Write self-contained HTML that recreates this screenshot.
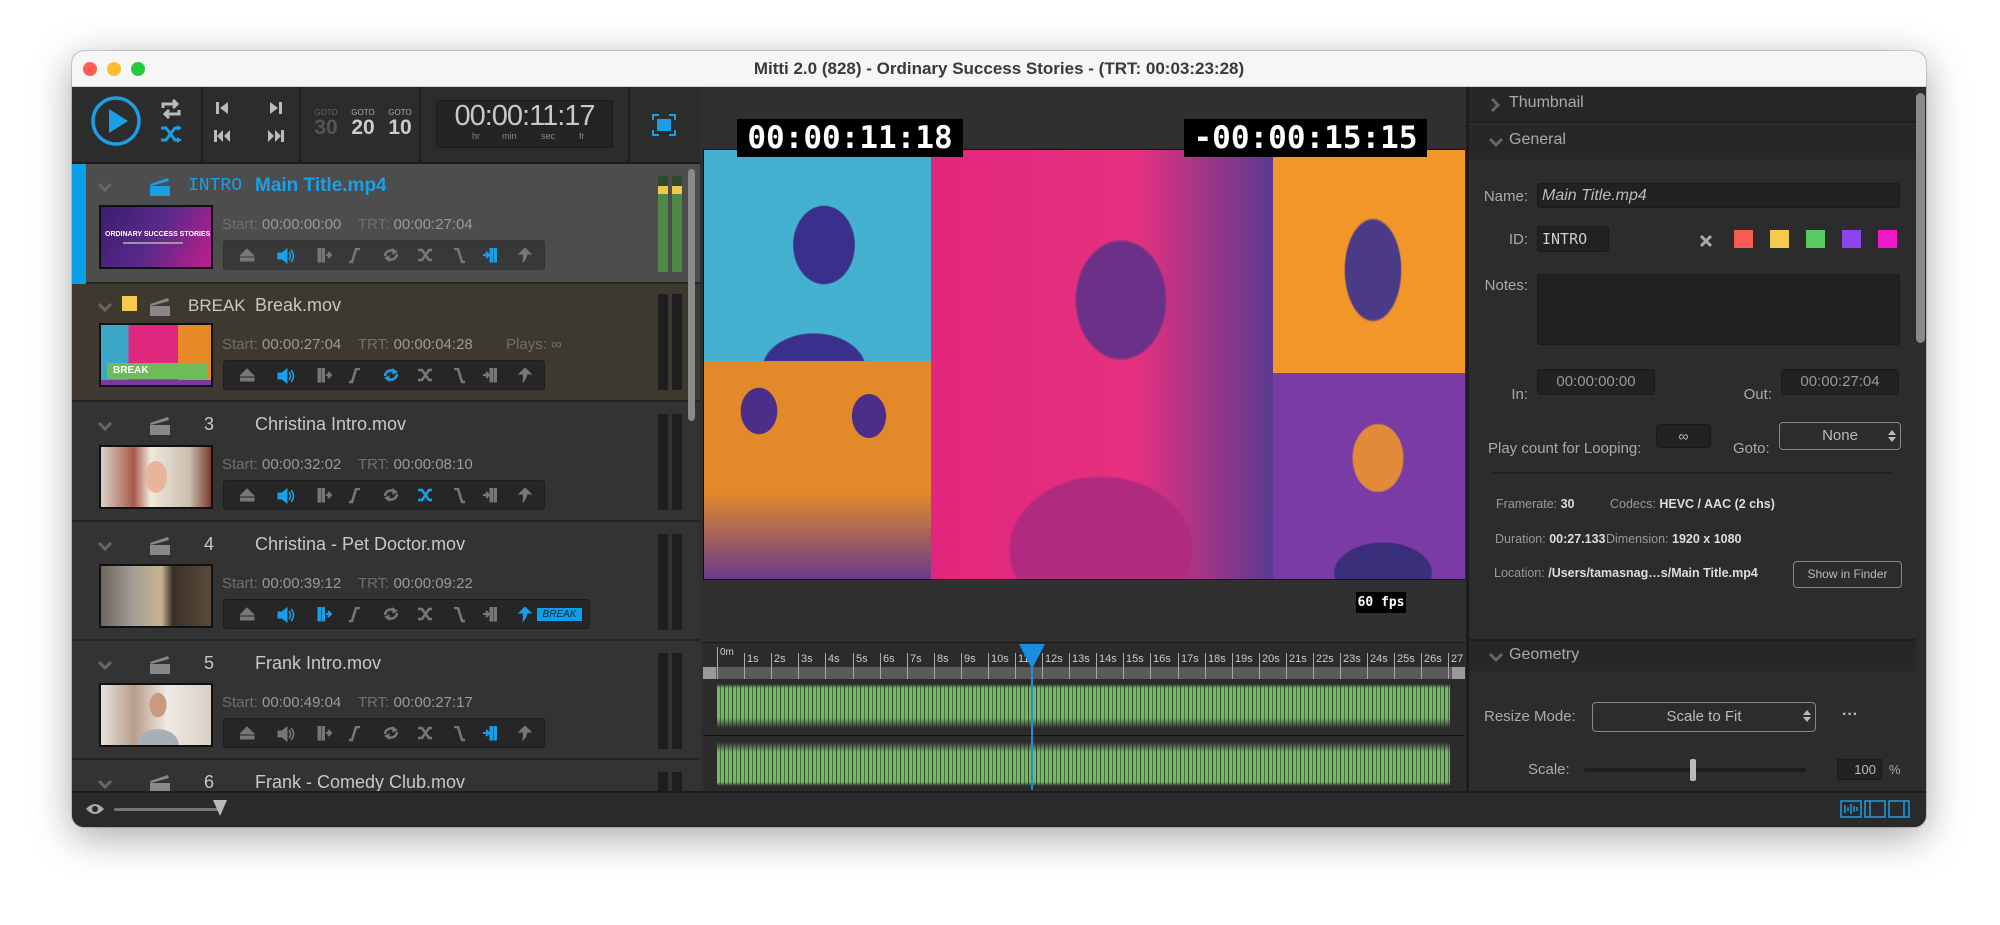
<!DOCTYPE html>
<html><head><meta charset="utf-8"><style>
*{box-sizing:border-box;margin:0;padding:0}
body{width:2000px;height:925px;background:#fff;position:relative;overflow:hidden;font-family:"Liberation Sans",sans-serif}
.abs{position:absolute}
.win{position:absolute;left:72px;top:51px;width:1854px;height:776px;border-radius:12px;overflow:hidden;background:#2b2b2b;box-shadow:0 10px 40px rgba(0,0,0,.35),0 0 0 1px rgba(0,0,0,.15)}
.title{position:absolute;left:0;top:0;width:100%;height:36px;background:#f6f6f6;border-bottom:1px solid #d0d0d0;text-align:center;font-size:17px;font-weight:bold;color:#3a3a3a;line-height:36px}
.tl{position:absolute;top:11px;width:14px;height:14px;border-radius:50%}
.row{position:absolute;left:0;width:628px;border-bottom:2px solid #242424;background:#333}
.chev{position:absolute;left:26px;width:14px;height:10px}
.clip{position:absolute;left:78px;width:20px;height:18px}
.rt{position:absolute;font-size:18px;color:#c8c8c8;white-space:nowrap}
.num{position:absolute;width:30px;text-align:right;left:112px;font-size:18px;color:#c8c8c8}
.thumb{position:absolute;left:27px;width:114px;height:64px;border:2px solid #111;overflow:hidden}
.st{position:absolute;left:150px;font-size:15px;color:#9a9a9a;white-space:nowrap}
.st b{font-weight:normal;color:#6f6f6f}
.ctrl{position:absolute;left:151px;height:30px;width:322px;background:#262626;border:1px solid #1d1d1d;border-radius:3px}
.met{position:absolute;width:10px;background:#1e1e1e}
.info{position:absolute;font-size:12.5px;color:#999;white-space:nowrap}
.info b{color:#ddd}
</style></head><body>
<div class="win">
<div class="title">Mitti 2.0 (828) - Ordinary Success Stories - (TRT: 00:03:23:28)</div>
<div class="tl" style="left:11px;background:#fe5f57"></div>
<div class="tl" style="left:35px;background:#febc2e"></div>
<div class="tl" style="left:59px;background:#28c840"></div>

<div class="abs" style="left:0;top:36px;width:628px;height:77px;background:#2c2c2c;border-bottom:2px solid #1c1c1c"></div>
<svg class="abs" style="left:18px;top:44px" width="52" height="52" viewBox="0 0 52 52"><circle cx="26" cy="26" r="23" fill="none" stroke="#1a9fe6" stroke-width="3.5"/><path d="M19 14 L38 26 L19 38Z" fill="#1a9fe6"/></svg>
<svg class="abs" style="left:88px;top:48px" width="22" height="20" viewBox="0 0 22 20"><path d="M3 9V5h13M13 1l4 4-4 4M19 11v4H6M9 19l-4-4 4-4" fill="none" stroke="#bbb" stroke-width="3"/></svg>
<svg class="abs" style="left:88px;top:74px" width="22" height="18" viewBox="0 0 22 18"><path d="M1 3h5l9 12h5M1 15h5l9-12h5" fill="none" stroke="#1a9fe6" stroke-width="3"/><path d="M17 0l5 3-5 3zM17 12l5 3-5 3z" fill="#1a9fe6"/></svg>
<div class="abs" style="left:129px;top:36px;width:2px;height:77px;background:#1c1c1c"></div>
<div class="abs" style="left:227px;top:36px;width:2px;height:77px;background:#1c1c1c"></div>
<div class="abs" style="left:347px;top:36px;width:2px;height:77px;background:#1c1c1c"></div>
<div class="abs" style="left:556px;top:36px;width:2px;height:77px;background:#1c1c1c"></div>
<svg class="abs" style="left:143px;top:50px" width="14" height="14"><rect x="1" y="1" width="3" height="12" fill="#bbb"/><path d="M13 1 L5 7 L13 13Z" fill="#bbb"/></svg>
<svg class="abs" style="left:197px;top:50px" width="14" height="14"><rect x="10" y="1" width="3" height="12" fill="#bbb"/><path d="M1 1 L9 7 L1 13Z" fill="#bbb"/></svg>
<svg class="abs" style="left:141px;top:78px" width="18" height="14"><rect x="1" y="1" width="3" height="12" fill="#bbb"/><path d="M10 1 L4 7 L10 13Z M17 1 L11 7 L17 13Z" fill="#bbb"/></svg>
<svg class="abs" style="left:195px;top:78px" width="18" height="14"><rect x="14" y="1" width="3" height="12" fill="#bbb"/><path d="M1 1 L7 7 L1 13Z M8 1 L14 7 L8 13Z" fill="#bbb"/></svg>
<div class="abs" style="left:240px;top:57px;width:28px;text-align:center;font-size:8px;color:#666">GOTO</div>
<div class="abs" style="left:240px;top:65px;width:28px;text-align:center;font-size:21px;font-weight:bold;color:#555">30</div>
<div class="abs" style="left:277px;top:57px;width:28px;text-align:center;font-size:8px;color:#aaa">GOTO</div>
<div class="abs" style="left:277px;top:65px;width:28px;text-align:center;font-size:21px;font-weight:bold;color:#ccc">20</div>
<div class="abs" style="left:314px;top:57px;width:28px;text-align:center;font-size:8px;color:#aaa">GOTO</div>
<div class="abs" style="left:314px;top:65px;width:28px;text-align:center;font-size:21px;font-weight:bold;color:#ccc">10</div>
<div class="abs" style="left:364px;top:49px;width:177px;height:48px;background:#242424;border:1px solid #1a1a1a;border-radius:3px"></div>
<div class="abs" style="left:364px;top:49px;width:177px;text-align:center;font-size:29px;color:#c8c8c8;letter-spacing:-1px">00:00:11:17</div>
<div class="abs" style="left:372px;top:80px;font-size:9px;color:#888"><span style="position:absolute;left:28px">hr</span><span style="position:absolute;left:58px">min</span><span style="position:absolute;left:97px">sec</span><span style="position:absolute;left:135px">fr</span></div>
<svg class="abs" style="left:580px;top:63px" width="24" height="22" viewBox="0 0 24 22"><path d="M1 6V1h6M17 1h6v5M23 16v5h-6M7 21H1v-5" fill="none" stroke="#1a9fe6" stroke-width="2"/><rect x="5" y="5" width="14" height="12" fill="#1a9fe6"/></svg>

<div class="abs" style="left:0;top:113px;width:628px;height:627px;background:#2a2a2a"></div>

<div class="row" style="top:113px;height:120px;background:#4d4d4d">
 <div class="abs" style="left:0;top:0;width:14px;height:120px;background:#0da0ea"></div>
 <svg class="chev" style="top:19px" viewBox="0 0 14 10"><path d="M1 1l6 6 6-6" fill="none" stroke="#666" stroke-width="3"/></svg>
 <svg class="clip" style="top:14px" viewBox="0 0 20 18"><path d="M0 8h20v10H0z M0 6 L18 0 L19 3 L1 8z" fill="#1a9fe6"/></svg>
 <div class="rt" style="left:116px;top:12px;color:#1aa0e8;font-family:'Liberation Mono',monospace;font-size:18px">INTRO</div>
 <div class="rt" style="left:183px;top:11px;color:#1aa0e8;font-weight:bold;font-size:19px">Main Title.mp4</div>
 <div class="thumb" style="top:41px;background:linear-gradient(120deg,#3b1d6e,#5a2a8a 50%,#c01e8a 100%)"><div style="position:absolute;left:4px;top:24px;font-size:7px;font-weight:bold;color:#fff;white-space:nowrap">ORDINARY SUCCESS STORIES</div><div style="position:absolute;left:22px;top:35px;width:60px;height:2px;background:#999"></div></div>
 <div class="st" style="top:52px"><b>Start:</b> 00:00:00:00 &nbsp;&nbsp;&nbsp;<b>TRT:</b> 00:00:27:04</div>
 <div class="ctrl" style="top:76px;background:#383838;border-color:#333"></div>
 <div class="met" style="left:586px;top:12px;height:96px;background:#2d4a2d"><div style="position:absolute;left:0;top:10px;width:10px;height:8px;background:#f2c84b"></div><div style="position:absolute;left:0;top:18px;width:10px;height:78px;background:#4e8a45"></div></div>
 <div class="met" style="left:600px;top:12px;height:96px;background:#2d4a2d"><div style="position:absolute;left:0;top:10px;width:10px;height:8px;background:#f2c84b"></div><div style="position:absolute;left:0;top:18px;width:10px;height:78px;background:#4e8a45"></div></div>
</div>

<div class="row" style="top:233px;height:118px;background:#3d3830">
 <svg class="chev" style="top:19px" viewBox="0 0 14 10"><path d="M1 1l6 6 6-6" fill="none" stroke="#666" stroke-width="3"/></svg>
 <div class="abs" style="left:50px;top:12px;width:15px;height:15px;background:#f2cb4f"></div>
 <svg class="clip" style="top:14px" viewBox="0 0 20 18"><path d="M0 8h20v10H0z M0 6 L18 0 L19 3 L1 8z" fill="#888"/></svg>
 <div class="rt" style="left:116px;top:12px;font-size:17px">BREAK</div>
 <div class="rt" style="left:183px;top:11px">Break.mov</div>
 <div class="thumb" style="top:39px;background:linear-gradient(90deg,#3aa6c8 0 25%,#e0287e 25% 70%,#e88a2a 70%)"><div style="position:absolute;left:6px;top:38px;width:100px;height:16px;background:#6dbb5a;color:#fff;font-size:10px;font-weight:bold;padding:2px 0 0 6px">BREAK</div><div style="position:absolute;left:0;top:55px;width:114px;height:9px;background:#7c3aa0"></div></div>
 <div class="st" style="top:52px"><b>Start:</b> 00:00:27:04 &nbsp;&nbsp;&nbsp;<b>TRT:</b> 00:00:04:28 &nbsp;&nbsp;&nbsp;&nbsp;&nbsp;&nbsp;&nbsp;<b>Plays:</b> <span style="color:#6f6f6f">∞</span></div>
 <div class="ctrl" style="top:76px"></div>
 <div class="met" style="left:586px;top:10px;height:96px"></div><div class="met" style="left:600px;top:10px;height:96px"></div>
</div>

<div class="row" style="top:351px;height:120px">
 <svg class="chev" style="top:20px" viewBox="0 0 14 10"><path d="M1 1l6 6 6-6" fill="none" stroke="#666" stroke-width="3"/></svg>
 <svg class="clip" style="top:15px" viewBox="0 0 20 18"><path d="M0 8h20v10H0z M0 6 L18 0 L19 3 L1 8z" fill="#888"/></svg>
 <div class="num" style="top:12px">3</div>
 <div class="rt" style="left:183px;top:12px">Christina Intro.mov</div>
 <div class="thumb" style="top:43px;background:radial-gradient(ellipse 18px 26px at 55px 30px,#e8b49a 60%,transparent 62%),linear-gradient(90deg,#d8d2c8,#a8594a 30%,#efe8dc 45%,#c9bfb0 80%,#7a3c30)"></div>
 <div class="st" style="top:54px"><b>Start:</b> 00:00:32:02 &nbsp;&nbsp;&nbsp;<b>TRT:</b> 00:00:08:10</div>
 <div class="ctrl" style="top:78px"></div>
 <div class="met" style="left:586px;top:12px;height:96px"></div><div class="met" style="left:600px;top:12px;height:96px"></div>
</div>

<div class="row" style="top:471px;height:119px">
 <svg class="chev" style="top:20px" viewBox="0 0 14 10"><path d="M1 1l6 6 6-6" fill="none" stroke="#666" stroke-width="3"/></svg>
 <svg class="clip" style="top:15px" viewBox="0 0 20 18"><path d="M0 8h20v10H0z M0 6 L18 0 L19 3 L1 8z" fill="#888"/></svg>
 <div class="num" style="top:12px">4</div>
 <div class="rt" style="left:183px;top:12px">Christina - Pet Doctor.mov</div>
 <div class="thumb" style="top:42px;background:linear-gradient(90deg,#6b665e,#a49f96 30%,#c9b48f 55%,#3b3129 65%,#5a4a3a)"></div>
 <div class="st" style="top:53px"><b>Start:</b> 00:00:39:12 &nbsp;&nbsp;&nbsp;<b>TRT:</b> 00:00:09:22</div>
 <div class="ctrl" style="top:77px;width:367px"><div style="position:absolute;left:313px;top:8px;width:45px;height:13px;background:#0da0ea;color:#123;font-size:10px;font-style:italic;text-align:center;line-height:13px">BREAK</div></div>
 <div class="met" style="left:586px;top:12px;height:96px"></div><div class="met" style="left:600px;top:12px;height:96px"></div>
</div>

<div class="row" style="top:590px;height:119px">
 <svg class="chev" style="top:20px" viewBox="0 0 14 10"><path d="M1 1l6 6 6-6" fill="none" stroke="#666" stroke-width="3"/></svg>
 <svg class="clip" style="top:15px" viewBox="0 0 20 18"><path d="M0 8h20v10H0z M0 6 L18 0 L19 3 L1 8z" fill="#888"/></svg>
 <div class="num" style="top:12px">5</div>
 <div class="rt" style="left:183px;top:12px">Frank Intro.mov</div>
 <div class="thumb" style="top:42px;background:radial-gradient(ellipse 14px 20px at 57px 20px,#c99a80 60%,transparent 62%),radial-gradient(ellipse 34px 26px at 57px 60px,#a7aeb5 60%,transparent 62%),linear-gradient(90deg,#e6e2dc,#b79e8a 30%,#eeeae4 60%,#d8cfc4)"></div>
 <div class="st" style="top:53px"><b>Start:</b> 00:00:49:04 &nbsp;&nbsp;&nbsp;<b>TRT:</b> 00:00:27:17</div>
 <div class="ctrl" style="top:77px"></div>
 <div class="met" style="left:586px;top:12px;height:96px"></div><div class="met" style="left:600px;top:12px;height:96px"></div>
</div>

<div class="row" style="top:709px;height:40px;border:none">
 <svg class="chev" style="top:20px" viewBox="0 0 14 10"><path d="M1 1l6 6 6-6" fill="none" stroke="#666" stroke-width="3"/></svg>
 <svg class="clip" style="top:15px" viewBox="0 0 20 18"><path d="M0 8h20v10H0z M0 6 L18 0 L19 3 L1 8z" fill="#888"/></svg>
 <div class="num" style="top:12px">6</div>
 <div class="rt" style="left:183px;top:12px">Frank - Comedy Club.mov</div>
 <div class="met" style="left:586px;top:12px;height:30px"></div><div class="met" style="left:600px;top:12px;height:30px"></div>
</div>
<div class="abs" style="left:616px;top:118px;width:7px;height:252px;border-radius:4px;background:#8a8a8a"></div>

<svg class="abs" style="left:0;top:0" width="628" height="740">
 <defs>
  <g id="ej"><path d="M0 8L7 1l7 7z M0 10h14v3H0z"/></g>
  <g id="sp"><path d="M0 5h4l5-4v14l-5-4H0z"/><path d="M11 4q3 4 0 8M13 2q5 6 0 12" fill="none" stroke-width="1.6"/></g>
  <g id="inp"><rect x="0" y="0" width="2.5" height="14"/><rect x="4" y="0" width="2.5" height="14"/><path d="M8 7h5M10 4l3 3-3 3" fill="none" stroke-width="2"/></g>
  <g id="fi"><path d="M1 14h3l4-13h4" fill="none" stroke-width="2.5"/></g>
  <g id="lp"><path d="M2 8a6 6 0 0 1 10-4M14 6a6 6 0 0 1-10 4" fill="none" stroke-width="2.5"/><path d="M10 1l4 3-4 2zM6 13l-4-3 4-2z"/></g>
  <g id="sh"><path d="M0 2h4l7 10h3M0 12h4l7-10h3" fill="none" stroke-width="2.5"/></g>
  <g id="fo"><path d="M1 1h4l4 13h3" fill="none" stroke-width="2.5"/></g>
  <g id="cu"><path d="M0 7h5M3 4l3 3-3 3" fill="none" stroke-width="2"/><rect x="7" y="0" width="2.5" height="14"/><rect x="11" y="0" width="2.5" height="14"/></g>
  <g id="ju"><path d="M7 0l6 6h-4q-1 5-4 8q1-5 0-8H1z"/></g>
 </defs>
</svg>
<div class="abs" style="left:0;top:0;width:628px;height:740px">
 <svg class="abs" style="left:168px;top:197px" width="320" height="16" fill="#777" stroke="#777">
  <use href="#ej" x="0"/><use href="#sp" x="38" fill="#1a9fe6" stroke="#1a9fe6"/><use href="#inp" x="78"/><use href="#fi" x="108"/><use href="#lp" x="143"/><use href="#sh" x="178"/><use href="#fo" x="213"/><use href="#cu" x="243" fill="#1a9fe6" stroke="#1a9fe6"/><use href="#ju" x="278"/>
 </svg>
 <svg class="abs" style="left:168px;top:317px" width="320" height="16" fill="#777" stroke="#777">
  <use href="#ej" x="0"/><use href="#sp" x="38" fill="#1a9fe6" stroke="#1a9fe6"/><use href="#inp" x="78"/><use href="#fi" x="108"/><use href="#lp" x="143" fill="#1a9fe6" stroke="#1a9fe6"/><use href="#sh" x="178"/><use href="#fo" x="213"/><use href="#cu" x="243"/><use href="#ju" x="278"/>
 </svg>
 <svg class="abs" style="left:168px;top:437px" width="320" height="16" fill="#777" stroke="#777">
  <use href="#ej" x="0"/><use href="#sp" x="38" fill="#1a9fe6" stroke="#1a9fe6"/><use href="#inp" x="78"/><use href="#fi" x="108"/><use href="#lp" x="143"/><use href="#sh" x="178" fill="#1a9fe6" stroke="#1a9fe6"/><use href="#fo" x="213"/><use href="#cu" x="243"/><use href="#ju" x="278"/>
 </svg>
 <svg class="abs" style="left:168px;top:556px" width="320" height="16" fill="#777" stroke="#777">
  <use href="#ej" x="0"/><use href="#sp" x="38" fill="#1a9fe6" stroke="#1a9fe6"/><use href="#inp" x="78" fill="#1a9fe6" stroke="#1a9fe6"/><use href="#fi" x="108"/><use href="#lp" x="143"/><use href="#sh" x="178"/><use href="#fo" x="213"/><use href="#cu" x="243"/><use href="#ju" x="278" fill="#1a9fe6" stroke="#1a9fe6"/>
 </svg>
 <svg class="abs" style="left:168px;top:675px" width="320" height="16" fill="#777" stroke="#777">
  <use href="#ej" x="0"/><use href="#sp" x="38"/><use href="#inp" x="78"/><use href="#fi" x="108"/><use href="#lp" x="143"/><use href="#sh" x="178"/><use href="#fo" x="213"/><use href="#cu" x="243" fill="#1a9fe6" stroke="#1a9fe6"/><use href="#ju" x="278"/>
 </svg>
</div>

<div class="abs" style="left:0;top:740px;width:1854px;height:36px;background:#2a2a2a;border-top:2px solid #1c1c1c"></div>
<svg class="abs" style="left:13px;top:752px" width="20" height="12"><path d="M1 6q9-10 18 0q-9 10-18 0z" fill="#aaa"/><circle cx="10" cy="6" r="3" fill="#2a2a2a"/></svg>
<div class="abs" style="left:42px;top:757px;width:106px;height:3px;background:#777;border-radius:2px"></div>
<svg class="abs" style="left:140px;top:748px" width="16" height="18"><path d="M1 1h14L8 17z" fill="#bbb"/></svg>
<svg class="abs" style="left:1768px;top:749px" width="80" height="18" fill="none" stroke="#1a9fe6" stroke-width="1.5"><rect x="1" y="1" width="20" height="16"/><path d="M5 5v8M8 7v4M11 4v10M14 6v6M17 7v4"/><rect x="25" y="1" width="20" height="16"/><path d="M30 1v16"/><rect x="49" y="1" width="20" height="16"/><path d="M64 1v16"/></svg>

<div class="abs" style="left:628px;top:36px;width:766px;height:704px;background:#303030"></div>
<div class="abs" style="left:631px;top:98px;width:762px;height:431px;background:#111"></div>
<div class="abs" style="left:632px;top:99px;width:227px;height:211px;background:radial-gradient(ellipse 55px 70px at 120px 95px,#3a2f8a 55%,transparent 57%),radial-gradient(ellipse 85px 60px at 110px 220px,#3a2f8a 60%,transparent 62%),#43b1cf"></div>
<div class="abs" style="left:632px;top:310px;width:227px;height:218px;background:radial-gradient(ellipse 30px 38px at 55px 50px,#4a2e8a 60%,transparent 62%),radial-gradient(ellipse 28px 36px at 165px 55px,#4a2e8a 60%,transparent 62%),linear-gradient(180deg,#e28a2a 60%,#6a3a8c 100%)"></div>
<div class="abs" style="left:859px;top:99px;width:342px;height:429px;background:radial-gradient(ellipse 80px 105px at 190px 150px,#6b3088 55%,transparent 58%),radial-gradient(ellipse 150px 120px at 170px 400px,#b02a80 60%,transparent 62%),linear-gradient(90deg,#e2267d,#e6307f 60%,#5a3a90 100%)"></div>
<div class="abs" style="left:1201px;top:99px;width:192px;height:223px;background:radial-gradient(ellipse 50px 90px at 100px 120px,#4a3a88 55%,transparent 58%),#f2962a"></div>
<div class="abs" style="left:1201px;top:322px;width:192px;height:206px;background:radial-gradient(ellipse 45px 60px at 105px 85px,#e28a3a 55%,transparent 58%),radial-gradient(ellipse 80px 50px at 110px 200px,#3a2f7a 60%,transparent 62%),#7a3ca4"></div>
<div class="abs" style="left:665px;top:68px;width:226px;height:38px;background:#000;color:#fff;font-family:'DejaVu Sans Mono','Liberation Mono',monospace;font-weight:bold;font-size:31px;line-height:38px;text-align:center">00:00:11:18</div>
<div class="abs" style="left:1112px;top:68px;width:243px;height:38px;background:#000;color:#fff;font-family:'DejaVu Sans Mono','Liberation Mono',monospace;font-weight:bold;font-size:31px;line-height:38px;text-align:center">-00:00:15:15</div>
<div class="abs" style="left:1284px;top:541px;width:50px;height:21px;background:#000;color:#fff;font-family:'DejaVu Sans Mono',monospace;font-weight:bold;font-size:13px;line-height:21px;text-align:center;white-space:nowrap">60 fps</div>

<div class="abs" style="left:631px;top:591px;width:762px;height:149px;background:#2b2b2b;border-top:1px solid #1a1a1a"></div>
<div class="abs" style="left:631px;top:616px;width:762px;height:12px;background:#5a5a5a"><div style="position:absolute;left:0;width:13px;height:12px;background:#999"></div><div style="position:absolute;right:0;width:13px;height:12px;background:#999"></div></div>
<div class="abs" style="left:645px;top:596px;width:740px;height:32px;font-size:11px;color:#ccc">
 <div style="position:absolute;left:0;top:0;border-left:1px solid #aaa;height:32px;padding-left:2px;font-size:10px">0m</div>
 <div style="position:absolute;left:27px;top:6px;border-left:1px solid #aaa;height:26px;padding-left:2px">1s</div>
 <div style="position:absolute;left:54px;top:6px;border-left:1px solid #aaa;height:26px;padding-left:2px">2s</div>
 <div style="position:absolute;left:81px;top:6px;border-left:1px solid #aaa;height:26px;padding-left:2px">3s</div>
 <div style="position:absolute;left:108px;top:6px;border-left:1px solid #aaa;height:26px;padding-left:2px">4s</div>
 <div style="position:absolute;left:136px;top:6px;border-left:1px solid #aaa;height:26px;padding-left:2px">5s</div>
 <div style="position:absolute;left:163px;top:6px;border-left:1px solid #aaa;height:26px;padding-left:2px">6s</div>
 <div style="position:absolute;left:190px;top:6px;border-left:1px solid #aaa;height:26px;padding-left:2px">7s</div>
 <div style="position:absolute;left:217px;top:6px;border-left:1px solid #aaa;height:26px;padding-left:2px">8s</div>
 <div style="position:absolute;left:244px;top:6px;border-left:1px solid #aaa;height:26px;padding-left:2px">9s</div>
 <div style="position:absolute;left:271px;top:6px;border-left:1px solid #aaa;height:26px;padding-left:2px">10s</div>
 <div style="position:absolute;left:298px;top:6px;border-left:1px solid #aaa;height:26px;padding-left:2px">11s</div>
 <div style="position:absolute;left:325px;top:6px;border-left:1px solid #aaa;height:26px;padding-left:2px">12s</div>
 <div style="position:absolute;left:352px;top:6px;border-left:1px solid #aaa;height:26px;padding-left:2px">13s</div>
 <div style="position:absolute;left:379px;top:6px;border-left:1px solid #aaa;height:26px;padding-left:2px">14s</div>
 <div style="position:absolute;left:406px;top:6px;border-left:1px solid #aaa;height:26px;padding-left:2px">15s</div>
 <div style="position:absolute;left:433px;top:6px;border-left:1px solid #aaa;height:26px;padding-left:2px">16s</div>
 <div style="position:absolute;left:461px;top:6px;border-left:1px solid #aaa;height:26px;padding-left:2px">17s</div>
 <div style="position:absolute;left:488px;top:6px;border-left:1px solid #aaa;height:26px;padding-left:2px">18s</div>
 <div style="position:absolute;left:515px;top:6px;border-left:1px solid #aaa;height:26px;padding-left:2px">19s</div>
 <div style="position:absolute;left:542px;top:6px;border-left:1px solid #aaa;height:26px;padding-left:2px">20s</div>
 <div style="position:absolute;left:569px;top:6px;border-left:1px solid #aaa;height:26px;padding-left:2px">21s</div>
 <div style="position:absolute;left:596px;top:6px;border-left:1px solid #aaa;height:26px;padding-left:2px">22s</div>
 <div style="position:absolute;left:623px;top:6px;border-left:1px solid #aaa;height:26px;padding-left:2px">23s</div>
 <div style="position:absolute;left:650px;top:6px;border-left:1px solid #aaa;height:26px;padding-left:2px">24s</div>
 <div style="position:absolute;left:677px;top:6px;border-left:1px solid #aaa;height:26px;padding-left:2px">25s</div>
 <div style="position:absolute;left:704px;top:6px;border-left:1px solid #aaa;height:26px;padding-left:2px">26s</div>
 <div style="position:absolute;left:731px;top:6px;border-left:1px solid #aaa;height:26px;padding-left:2px">27</div>
</div>
<div class="abs" style="left:645px;top:629px;width:733px;height:110px;background:
 repeating-linear-gradient(90deg,transparent 0 3px,rgba(43,43,43,.55) 3px 4px,transparent 4px 7px,rgba(43,43,43,.8) 7px 8px),
 linear-gradient(180deg,#2b2b2b 0 4px,#72bb60 8px 38px,#2b2b2b 48px 62px,#72bb60 72px 102px,#2b2b2b 106px)"></div>
<div class="abs" style="left:631px;top:684px;width:762px;height:1px;background:#111"></div>
<svg class="abs" style="left:947px;top:592px" width="26" height="26"><path d="M0 1h26L13 26z" fill="#1a8ee0"/></svg>
<div class="abs" style="left:959px;top:605px;width:2px;height:134px;background:#1a8ee0"></div>

<div class="abs" style="left:1394px;top:36px;width:460px;height:704px;background:#2c2c2c;border-left:3px solid #1c1c1c"></div>
<div class="abs" style="left:1397px;top:36px;width:447px;height:36px;background:#272727;border-bottom:2px solid #1e1e1e"></div>
<svg class="abs" style="left:1418px;top:46px" width="10" height="16"><path d="M2 2l6 6-6 6" fill="none" stroke="#666" stroke-width="3"/></svg>
<div class="abs" style="left:1437px;top:43px;font-size:16px;color:#aaa">Thumbnail</div>
<div class="abs" style="left:1397px;top:74px;width:447px;height:34px;background:#272727"></div>
<svg class="abs" style="left:1416px;top:86px" width="16" height="10"><path d="M2 2l6 6 6-6" fill="none" stroke="#666" stroke-width="3"/></svg>
<div class="abs" style="left:1437px;top:80px;font-size:16px;color:#aaa">General</div>
<div class="abs" style="left:1844px;top:42px;width:9px;height:250px;border-radius:5px;background:#8a8a8a"></div>

<div class="abs" style="left:1400px;top:137px;width:56px;text-align:right;font-size:15px;color:#aaa">Name:</div>
<div class="abs" style="left:1465px;top:132px;width:363px;height:25px;background:#212121;border:1px solid #1a1a1a;border-radius:3px;font-size:16px;font-style:italic;color:#bbb;padding:3px 4px">Main Title.mp4</div>
<div class="abs" style="left:1400px;top:180px;width:56px;text-align:right;font-size:15px;color:#aaa">ID:</div>
<div class="abs" style="left:1465px;top:175px;width:72px;height:26px;background:#212121;border:1px solid #1a1a1a;border-radius:3px;font-family:'DejaVu Sans Mono',monospace;font-size:15px;color:#ccc;padding:3px 4px">INTRO</div>
<svg class="abs" style="left:1627px;top:183px" width="14" height="14"><path d="M2 2l10 10M12 2L2 12" stroke="#aaa" stroke-width="3"/></svg>
<div class="abs" style="left:1662px;top:179px;width:19px;height:18px;background:#f85a55"></div>
<div class="abs" style="left:1698px;top:179px;width:19px;height:18px;background:#f2cb4f"></div>
<div class="abs" style="left:1734px;top:179px;width:19px;height:18px;background:#5acb62"></div>
<div class="abs" style="left:1770px;top:179px;width:19px;height:18px;background:#8a45f0"></div>
<div class="abs" style="left:1806px;top:179px;width:19px;height:18px;background:#f018c8"></div>
<div class="abs" style="left:1400px;top:226px;width:56px;text-align:right;font-size:15px;color:#aaa">Notes:</div>
<div class="abs" style="left:1465px;top:223px;width:363px;height:71px;background:#212121;border:1px solid #1a1a1a;border-radius:3px"></div>
<div class="abs" style="left:1400px;top:335px;width:56px;text-align:right;font-size:15px;color:#aaa">In:</div>
<div class="abs" style="left:1465px;top:318px;width:118px;height:26px;background:#222;border:1px solid #1a1a1a;border-radius:3px;font-size:15px;color:#999;text-align:center;line-height:24px">00:00:00:00</div>
<div class="abs" style="left:1660px;top:335px;width:40px;text-align:right;font-size:15px;color:#aaa">Out:</div>
<div class="abs" style="left:1709px;top:318px;width:118px;height:26px;background:#222;border:1px solid #1a1a1a;border-radius:3px;font-size:15px;color:#999;text-align:center;line-height:24px">00:00:27:04</div>
<div class="abs" style="left:1416px;top:389px;font-size:15px;color:#aaa">Play count for Looping:</div>
<div class="abs" style="left:1584px;top:373px;width:55px;height:24px;background:#222;border:1px solid #1a1a1a;border-radius:3px;font-size:14px;color:#bbb;text-align:center;line-height:22px">∞</div>
<div class="abs" style="left:1661px;top:389px;font-size:15px;color:#aaa">Goto:</div>
<div class="abs" style="left:1707px;top:371px;width:122px;height:28px;border:1px solid #888;border-radius:4px;font-size:15px;color:#bbb;text-align:center;line-height:26px">None</div>
<svg class="abs" style="left:1816px;top:378px" width="8" height="14"><path d="M0 6L4 1 8 6zM0 8l4 5 4-5z" fill="#bbb"/></svg>
<div class="abs" style="left:1420px;top:421px;width:401px;height:2px;background:#222"></div>
<div class="info" style="left:1424px;top:446px">Framerate: <b>30</b></div>
<div class="info" style="left:1538px;top:446px">Codecs: <b>HEVC / AAC (2 chs)</b></div>
<div class="info" style="left:1423px;top:481px">Duration: <b>00:27.133</b></div>
<div class="info" style="left:1534px;top:481px">Dimension: <b>1920 x 1080</b></div>
<div class="info" style="left:1422px;top:515px">Location: <b>/Users/tamasnag…s/Main Title.mp4</b></div>
<div class="abs" style="left:1721px;top:510px;width:109px;height:27px;border:1px solid #888;border-radius:4px;font-size:12px;color:#bbb;text-align:center;line-height:25px">Show in Finder</div>
<div class="abs" style="left:1397px;top:588px;width:447px;height:32px;background:#272727;border-top:2px solid #1e1e1e"></div>
<svg class="abs" style="left:1416px;top:601px" width="16" height="10"><path d="M2 2l6 6 6-6" fill="none" stroke="#666" stroke-width="3"/></svg>
<div class="abs" style="left:1437px;top:595px;font-size:16px;color:#aaa">Geometry</div>
<div class="abs" style="left:1412px;top:657px;font-size:15px;color:#aaa">Resize Mode:</div>
<div class="abs" style="left:1520px;top:651px;width:224px;height:30px;border:1px solid #888;border-radius:4px;font-size:15px;color:#bbb;text-align:center;line-height:28px">Scale to Fit</div>
<svg class="abs" style="left:1731px;top:658px" width="8" height="14"><path d="M0 6L4 1 8 6zM0 8l4 5 4-5z" fill="#bbb"/></svg>
<div class="abs" style="left:1770px;top:655px;font-size:16px;color:#bbb;font-weight:bold">···</div>
<div class="abs" style="left:1456px;top:710px;font-size:15px;color:#aaa">Scale:</div>
<div class="abs" style="left:1512px;top:717px;width:222px;height:4px;background:#1e1e1e;border-radius:2px"></div>
<div class="abs" style="left:1618px;top:708px;width:6px;height:22px;background:#bbb;border-radius:2px"></div>
<div class="abs" style="left:1765px;top:708px;width:45px;height:21px;background:#222;border:1px solid #1a1a1a;font-size:13px;color:#bbb;text-align:right;padding-right:5px;line-height:19px">100</div>
<div class="abs" style="left:1817px;top:711px;font-size:13px;color:#aaa">%</div>
</div>
</body></html>
